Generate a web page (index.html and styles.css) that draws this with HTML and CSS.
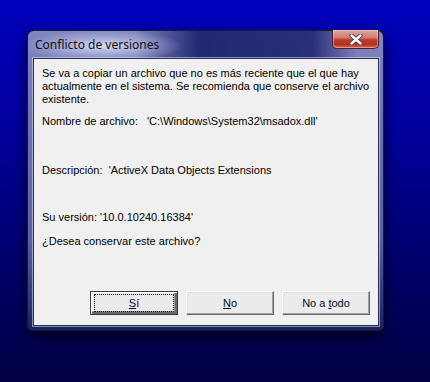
FILE: index.html
```html
<!DOCTYPE html>
<html lang="es">
<head>
    <meta charset="UTF-8">
    <meta name="viewport" content="width=device-width, initial-scale=1.0">
    <title>Conflicto de versiones</title>
    <link rel="stylesheet" href="styles.css">
</head>
<body>

    <div class="window">
        <div class="titlebar">
            <span class="title">Conflicto de versiones</span>
            <button class="close" aria-label="Cerrar">
                <svg width="14" height="11" viewBox="0 0 14 11">
                    <path d="M2.5 1.5 L11.5 9.5 M11.5 1.5 L2.5 9.5" stroke="#3b3b4a" stroke-width="4.2" stroke-linecap="round"/>
                    <path d="M2.5 1.5 L11.5 9.5 M11.5 1.5 L2.5 9.5" stroke="#fff" stroke-width="2.4" stroke-linecap="round"/>
                </svg>
            </button>
        </div>

        <div class="client">
            <p class="intro">Se va a copiar un archivo que no es más reciente que el que hay actualmente en el sistema. Se recomienda que conserve el archivo existente.</p>
            <p class="file"><span class="label">Nombre de archivo:</span>'C:\Windows\System32\msadox.dll'</p>
            <p class="desc">Descripción:&nbsp; 'ActiveX Data Objects Extensions</p>
            <p class="version">Su versión: '10.0.10240.16384'</p>
            <p class="question">¿Desea conservar este archivo?</p>

            <div class="buttons">
                <button class="btn default"><span class="focus"><u>S</u>í</span></button>
                <button class="btn"><span><u>N</u>o</span></button>
                <button class="btn"><span>No a <u>t</u>odo</span></button>
            </div>
        </div>
    </div>

</body>
</html>
```

FILE: styles.css
```css
body { margin: 0; height: 382px; overflow: hidden; background: linear-gradient(to bottom, #0000bc 0%, #00009c 35%, #00005c 80%, #000042 100%); font-family: "Liberation Sans", Arial, sans-serif; }

.window { margin: 30px 0 0 27px; width: 357px; height: 301px; box-sizing: border-box; padding: 0 4px 4px 5px; border: 1px solid #141a3e; border-radius: 7px 7px 5px 5px; display: flex; flex-direction: column; background: linear-gradient(to bottom, #8186c0 0%, #6d72b1 30%, #5a5f9f 70%, #2a3070 93%, #1a2058 100%); box-shadow: 0 5px 14px rgba(0, 0, 0, 0.7); }

.titlebar { height: 27px; display: flex; align-items: flex-start; margin: 0 -4px 0 -5px; padding: 0 4px 0 7px; border-radius: 6px 6px 0 0; background: radial-gradient(ellipse 80px 16px at 75px 15px, rgba(230, 232, 248, 0.85), rgba(200, 204, 235, 0.4) 60%, transparent 100%), linear-gradient(to right, rgba(40, 45, 120, 0) 30%, rgba(26, 31, 108, 0.9) 48%, rgba(26, 31, 108, 0.85) 80%, rgba(40, 45, 120, 0) 93%); }
.title { font-family: "Noto Sans", "Open Sans", sans-serif; font-size: 12px; color: #101010; margin-top: 5px; }

.close { margin-left: auto; width: 47px; height: 19px; margin-top: -1px; padding: 0; border: 1px solid #4a1e28; border-top: none; border-radius: 0 0 5px 5px; background: linear-gradient(to bottom, #e2a8a0 0%, #d08078 40%, #c23a2c 55%, #b8301f 80%, #d46a50 100%); box-shadow: inset 0 0 0 1px rgba(255, 220, 210, 0.45); display: flex; align-items: center; justify-content: center; }

.client { flex: 1; background: #f0f0f0; border: 1px solid #28305e; box-shadow: 0 0 0 1px rgba(220, 224, 245, 0.55); display: flex; flex-direction: column; padding: 8px 8px 10px 8px; font-size: 11px; line-height: 13px; color: #000; }

.intro { width: 336px; margin: 0; }
.file { margin: 9px 0 0; }
.label { display: inline-block; width: 105px; }
.desc { margin: 36px 0 0; }
.version { margin: 34px 0 0; }
.question { margin: 11px 0 0; }

.buttons { margin-top: auto; display: flex; justify-content: flex-end; gap: 8px; }
.btn { width: 88px; height: 24px; padding: 0; font-family: inherit; font-size: 11px; color: #0a0a20; background: #ebebeb; border: 1px solid; border-color: #fff #696969 #696969 #fff; box-shadow: inset -1px -1px #a0a0a0, inset 1px 1px #e3e3e3; display: flex; align-items: center; justify-content: center; }
.btn.default { border: 1px solid #3c3c3c; box-shadow: inset 1px 1px #fff, inset -2px -2px #696969, inset -3px -3px #a0a0a0; }
.focus { width: 80px; height: 18px; box-sizing: border-box; border: 1px dotted #000; display: flex; align-items: center; justify-content: center; }
```
